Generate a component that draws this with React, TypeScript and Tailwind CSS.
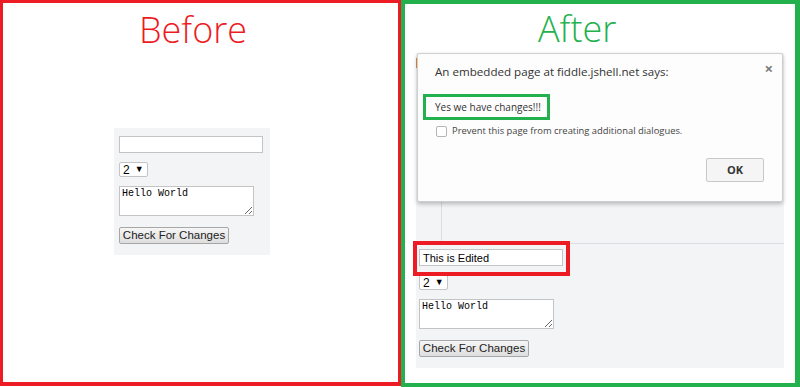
import React from "react";

function DemoForm({ value }: { value: string }) {
  return (
    <>
      <input
        readOnly
        value={value}
        className="block w-[144px] h-[17px] border border-[#c4c4c4] bg-white px-[3px] text-[11px] leading-[15px] text-black outline-none"
        style={{ fontFamily: "'Liberation Sans', Arial, sans-serif" }}
      />
      <div
        className="mt-[9px] flex h-[15px] w-[29px] items-center gap-[5px] rounded-[2px] border border-[#c4c4c4] bg-white pl-[3px] text-[12px] text-black"
        style={{ fontFamily: "'Liberation Sans', Arial, sans-serif" }}
      >
        <span className="leading-none">2</span>
        <span className="text-[9px] leading-none">▼</span>
      </div>
      <textarea
        readOnly
        value="Hello World"
        className="mt-[9px] block h-[30px] w-[135px] border border-[#c4c4c4] bg-white px-[2px] py-[1px] text-[10px] leading-[12px] text-black outline-none"
        style={{ fontFamily: "'Liberation Mono', 'DejaVu Sans Mono', monospace" }}
      />
      <button
        className="mt-[11px] block h-[17px] w-[110px] rounded-[2px] border border-[#a7a7a7] bg-gradient-to-b from-[#f6f6f6] to-[#dedede] text-[11.5px] leading-[15px] text-[#222]"
        style={{ fontFamily: "'Liberation Sans', Arial, sans-serif" }}
      >
        Check For Changes
      </button>
    </>
  );
}

export default function App() {
  return (
    <div className="flex h-[387px] w-[800px] overflow-hidden bg-white">
      {/* Before */}
      <div className="h-[386px] w-[401px] shrink-0 border-[3px] border-b-4 border-[#ed1c24]">
        <div
          className="pl-[136px] pt-[3px] text-[36px] font-light leading-[48px] text-[#ed1c24]"
          style={{ fontFamily: "'Open Sans', Lato, sans-serif" }}
        >
          Before
        </div>
        <div className="ml-[111px] mt-[74px] w-[156px] bg-[#f3f4f6] pb-[11px] pl-[5px] pt-[8px]">
          <DemoForm value="" />
        </div>
      </div>

      {/* After */}
      <div className="h-[387px] w-[399px] shrink-0 border-4 border-r-[5px] border-[#22b14c]">
        <div
          className="pl-[133px] pt-[1px] text-[36px] font-light leading-[48px] text-[#22b14c]"
          style={{ fontFamily: "'Open Sans', Lato, sans-serif" }}
        >
          After
        </div>

        <div className="relative ml-[11px] w-[368px] bg-[#f3f4f6]">
          <div className="flex h-[191px] border-b border-[#dcdde0]">
            <div className="w-[26px] border-r border-[#dcdde0]" />
          </div>
          <div className="pb-[11px] pl-[3px] pt-[5px]">
            <DemoForm value="This is Edited" />
          </div>

          <span className="absolute left-0 top-[5px] h-[10px] w-[2px] bg-[#f0883a]" />

          {/* highlight on the edited input */}
          <div className="absolute left-[-3px] top-[188px] h-[35px] w-[157px] border-4 border-[#ed1c24]" />

          {/* alert dialog */}
          <div
            className="absolute left-[1px] top-0 flex h-[149px] w-[366px] flex-col rounded-[2px] border border-[#cfcfcf] bg-[#fdfdfd] shadow-[0_2px_4px_rgba(0,0,0,0.25)]"
            style={{ fontFamily: "'Open Sans', 'Noto Sans', sans-serif" }}
          >
            <div className="flex items-start justify-between pl-[17px] pr-[9px] pt-[7px]">
              <span className="mt-[2px] text-[11.6px] leading-[18px] text-[#333]">
                An embedded page at fiddle.jshell.net says:
              </span>
              <span className="text-[15px] font-bold leading-[14px] text-[#7a7a7a]">×</span>
            </div>
            <div className="ml-[5px] mt-[13px] flex h-[26px] w-[127px] items-center border-[3px] border-[#22b14c] pl-[9px] text-[10px] text-[#333]">
              Yes we have changes!!!
            </div>
            <div className="ml-[18px] mt-[5px] flex items-center gap-[5px]">
              <span className="h-[11px] w-[11px] rounded-[2px] border border-[#b5b5b5] bg-white" />
              <span className="text-[9.4px] leading-[12px] text-[#444]">
                Prevent this page from creating additional dialogues.
              </span>
            </div>
            <div className="mt-auto flex justify-end pb-[19px] pr-[18px]">
              <button className="h-[24px] w-[58px] rounded-[2px] border border-[#c8c8c8] bg-[#f5f5f5] text-[11px] font-bold text-[#333]">
                OK
              </button>
            </div>
          </div>
        </div>
      </div>
    </div>
  );
}
